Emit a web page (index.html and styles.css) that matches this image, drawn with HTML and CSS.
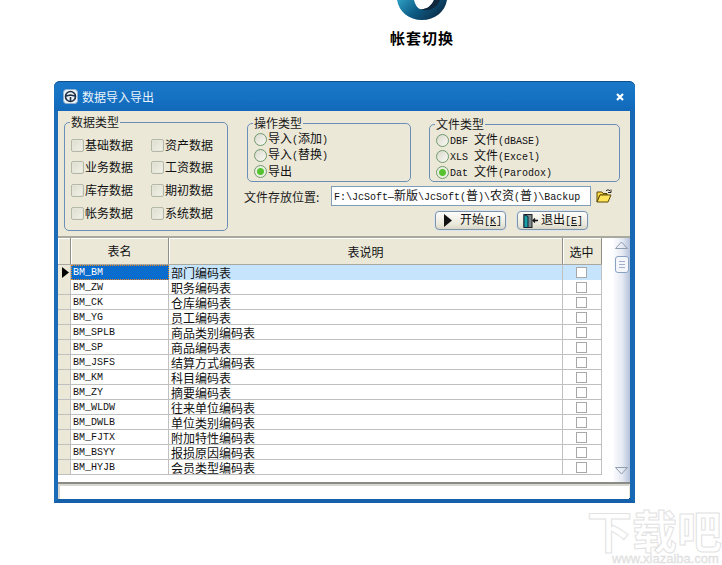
FILE: index.html
```html
<!DOCTYPE html>
<html lang="zh">
<head>
<meta charset="utf-8">
<title>数据导入导出</title>
<link rel="stylesheet" href="styles.css">
</head>
<body>
<header class="top">
  <svg class="logo" width="52" height="20" viewBox="0 0 52 20">
    <defs>
      <linearGradient id="lg" x1="0" y1="0" x2="1" y2="0.4">
        <stop offset="0" stop-color="#2f9fc4"/>
        <stop offset="0.5" stop-color="#0e5d86"/>
        <stop offset="1" stop-color="#0b2f4c"/>
      </linearGradient>
    </defs>
    <path d="M1 0C3 12 13 20 26 20C39 20 49 12 51 0L38 0C35 7 29 10 24 9C21 8 19 4 18 0Z" fill="url(#lg)"/>
    <path d="M38 0C35 7 29 10 24 9C32 13 42 7 44 0Z" fill="#10273c"/>
  </svg>
  <div class="top-title">帐套切换</div>
</header>

<section class="win">
  <div class="titlebar">
    <svg class="tb-icon" width="15" height="15" viewBox="0 0 15 15">
      <rect x="0.5" y="0.5" width="14" height="14" rx="3" fill="#eef3f8" stroke="#8fb0d0"/>
      <circle cx="7.5" cy="7.5" r="5" fill="none" stroke="#1c2f44" stroke-width="1.6"/>
      <path d="M3 7L7.5 6L12 7M7.5 8V12" fill="none" stroke="#1c2f44" stroke-width="1.6"/>
    </svg>
    <span class="tb-text">数据导入导出</span>
    <svg class="tb-close" width="8" height="8" viewBox="0 0 8 8"><path d="M1 1L7 7M7 1L1 7" stroke="#fff" stroke-width="2.2"/></svg>
  </div>

  <div class="panel">
    <fieldset class="grp grp-data">
      <legend>数据类型</legend>
      <div class="checks">
        <label class="chk"><i class="cb"></i>基础数据</label>
        <label class="chk"><i class="cb"></i>资产数据</label>
        <label class="chk"><i class="cb"></i>业务数据</label>
        <label class="chk"><i class="cb"></i>工资数据</label>
        <label class="chk"><i class="cb"></i>库存数据</label>
        <label class="chk"><i class="cb"></i>期初数据</label>
        <label class="chk"><i class="cb"></i>帐务数据</label>
        <label class="chk"><i class="cb"></i>系统数据</label>
      </div>
    </fieldset>

    <div class="side">
      <div class="side-groups">
        <fieldset class="grp grp-op">
          <legend>操作类型</legend>
          <label class="rad"><i class="rb"></i><span>导入<span class="lat">(</span>添加<span class="lat">)</span></span></label>
          <label class="rad"><i class="rb"></i><span>导入<span class="lat">(</span>替换<span class="lat">)</span></span></label>
          <label class="rad"><i class="rb on"></i><span>导出</span></label>
        </fieldset>
        <fieldset class="grp grp-file">
          <legend>文件类型</legend>
          <label class="rad"><i class="rb"></i><span><span class="lat">DBF&nbsp;</span>文件<span class="lat">(dBASE)</span></span></label>
          <label class="rad"><i class="rb"></i><span><span class="lat">XLS&nbsp;</span>文件<span class="lat">(Excel)</span></span></label>
          <label class="rad"><i class="rb on"></i><span><span class="lat">Dat&nbsp;</span>文件<span class="lat">(Parodox)</span></span></label>
        </fieldset>
      </div>
      <div class="path-row">
        <span class="path-label">文件存放位置:</span>
        <div class="path-input"><span class="lat">F:\JcSoft—</span>新版<span class="lat">\JcSoft(</span>普<span class="lat">)\</span>农资<span class="lat">(</span>普<span class="lat">)\Backup</span></div>
        <svg class="folder" width="16" height="14" viewBox="0 0 16 14">
          <path d="M1 3H6L7 4.500H11V6H4L1 13Z" fill="#ffd84a" stroke="#5a4a00"/>
          <path d="M1 13H12L15 6H4Z" fill="#ffe45c" stroke="#5a4a00"/>
          <path d="M10 2C11 0.500 13 0.500 14 2M15 0.500V3.500H12" fill="none" stroke="#222"/>
        </svg>
      </div>
      <div class="btn-row">
        <div class="btn btn-start">
          <svg width="10" height="13" viewBox="0 0 10 13"><path d="M1 0L9 6.500L1 13Z" fill="#111"/></svg>
          <span class="btn-text">开始<span class="lat">[<u>K</u>]</span></span>
        </div>
        <div class="btn btn-exit">
          <svg width="15" height="14" viewBox="0 0 15 14">
            <rect x="1" y="0.500" width="8" height="13" fill="#7d8a90" stroke="#222"/>
            <path d="M1 0.500L5 2.500V13.500L1 13.500Z" fill="#19a0a8" stroke="#123"/>
            <path d="M10 6.500H15M12 4.500L10 6.500L12 8.500" fill="none" stroke="#111" stroke-width="1.300"/>
          </svg>
          <span class="btn-text">退出<span class="lat">[<u>E</u>]</span></span>
        </div>
      </div>
    </div>
  </div>

  <div class="grid-wrap">
    <div class="grid">
      <div class="row head">
        <div class="c ind"></div><div class="c name">表名</div><div class="c desc">表说明</div><div class="c sel">选中</div>
      </div>
      <div class="row cur"><div class="c ind"><svg width="7" height="11" viewBox="0 0 7 11"><path d="M0 0L7 5.500L0 11Z" fill="#000"/></svg></div><div class="c name">BM_BM</div><div class="c desc">部门编码表</div><div class="c sel"><i class="box"></i></div></div>
      <div class="row"><div class="c ind"></div><div class="c name">BM_ZW</div><div class="c desc">职务编码表</div><div class="c sel"><i class="box"></i></div></div>
      <div class="row"><div class="c ind"></div><div class="c name">BM_CK</div><div class="c desc">仓库编码表</div><div class="c sel"><i class="box"></i></div></div>
      <div class="row"><div class="c ind"></div><div class="c name">BM_YG</div><div class="c desc">员工编码表</div><div class="c sel"><i class="box"></i></div></div>
      <div class="row"><div class="c ind"></div><div class="c name">BM_SPLB</div><div class="c desc">商品类别编码表</div><div class="c sel"><i class="box"></i></div></div>
      <div class="row"><div class="c ind"></div><div class="c name">BM_SP</div><div class="c desc">商品编码表</div><div class="c sel"><i class="box"></i></div></div>
      <div class="row"><div class="c ind"></div><div class="c name">BM_JSFS</div><div class="c desc">结算方式编码表</div><div class="c sel"><i class="box"></i></div></div>
      <div class="row"><div class="c ind"></div><div class="c name">BM_KM</div><div class="c desc">科目编码表</div><div class="c sel"><i class="box"></i></div></div>
      <div class="row"><div class="c ind"></div><div class="c name">BM_ZY</div><div class="c desc">摘要编码表</div><div class="c sel"><i class="box"></i></div></div>
      <div class="row"><div class="c ind"></div><div class="c name">BM_WLDW</div><div class="c desc">往来单位编码表</div><div class="c sel"><i class="box"></i></div></div>
      <div class="row"><div class="c ind"></div><div class="c name">BM_DWLB</div><div class="c desc">单位类别编码表</div><div class="c sel"><i class="box"></i></div></div>
      <div class="row"><div class="c ind"></div><div class="c name">BM_FJTX</div><div class="c desc">附加特性编码表</div><div class="c sel"><i class="box"></i></div></div>
      <div class="row"><div class="c ind"></div><div class="c name">BM_BSYY</div><div class="c desc">报损原因编码表</div><div class="c sel"><i class="box"></i></div></div>
      <div class="row"><div class="c ind"></div><div class="c name">BM_HYJB</div><div class="c desc">会员类型编码表</div><div class="c sel"><i class="box"></i></div></div>
    </div>
    <div class="scroll">
      <svg class="arrow" width="13" height="8" viewBox="0 0 13 8"><path d="M0.500 7.500L6.500 1L12.500 7.500" fill="none" stroke="#8f9db0"/><path d="M0.500 7.500H12.500" stroke="#8f9db0"/></svg>
      <div class="thumb"><i></i><i></i><i></i></div>
      <svg class="arrow arrow-down" width="13" height="8" viewBox="0 0 13 8"><path d="M0.500 0.500L6.500 7L12.500 0.500Z" fill="none" stroke="#8f9db0"/></svg>
    </div>
  </div>
  <div class="status"></div>
</section>

<div class="mark">
  <div class="mark-big">下载吧</div>
  <div class="mark-url">www.xiazaiba.com</div>
</div>
</body>
</html>
```

FILE: styles.css
```css
* { box-sizing: border-box; }
html, body { margin: 0; padding: 0; }
body {
  position: relative;
  width: 722px;
  height: 565px;
  overflow: hidden;
  background: #fff;
  font-family: "Noto Sans CJK SC", "Liberation Sans", sans-serif;
  font-size: 12px;
  color: #111;
}
i { display: block; font-style: normal; }
.lat { font-family: "Liberation Mono", monospace; font-size: 10px; }

.top { height: 81px; margin-left: 396px; width: 52px; }
.logo { display: block; }
.top-title {
  margin: 10px 0 0 -6px;
  width: 70px;
  font-size: 15px;
  line-height: 16px;
  font-weight: 700;
  letter-spacing: 1px;
  color: #000;
  white-space: nowrap;
}

.win {
  width: 581px;
  height: 422px;
  margin-left: 54px;
  border: 4px solid #1668b4;
  border-top: 0;
  border-right-width: 5px;
  border-left-color: #1a6cb8;
  border-bottom-color: #1460aa;
  border-radius: 6px 6px 0 0;
  background: #ebe8d8;
  box-shadow: inset 0 -1px 0 #0e4a86;
  display: flex;
  flex-direction: column;
}
.titlebar {
  height: 30px;
  margin: 0 -5px 0 -4px;
  padding: 0 10px 0 9px;
  border-top: 1px solid #0d4f8f;
  border-radius: 6px 6px 0 0;
  background: linear-gradient(#1b78c8, #1470c2 60%, #1268b8);
  display: flex;
  align-items: center;
  color: #fff;
}
.tb-icon { display: block; margin-right: 4px; }
.tb-text { font-size: 12px; line-height: 14px; color: #eaf3fb; }
.tb-close { display: block; margin-left: auto; margin-right: 1px; }

.panel {
  height: 125px;
  padding: 4px 9px 0 6px;
  display: flex;
  align-items: flex-start;
}
.grp {
  margin: 0;
  padding: 0;
  border: 1px solid #6c8fb8;
  border-radius: 5px;
  min-width: 0;
}
.grp legend {
  padding: 0 1px;
  margin-left: 5px;
  font-size: 12px;
  line-height: 14px;
  color: #1a1a1a;
}
.grp-data { width: 164px; height: 116px; flex: none; }
.checks {
  display: grid;
  grid-template-columns: 80px 76px;
  grid-template-rows: 22px 22px 24px 22px;
  padding: 5px 0 0 6px;
}
.chk { display: flex; align-items: center; gap: 1px; line-height: 14px; white-space: nowrap; }
.cb {
  width: 13px;
  height: 13px;
  border: 1px solid #b4b8a8;
  border-radius: 2px;
  background: linear-gradient(135deg, #dcdccc, #f2f2ea);
  box-shadow: inset 0 0 0 1px #e6e6da;
}

.side { margin-left: 19px; width: 373px; flex: none; }
.side-groups { display: flex; align-items: flex-start; height: 67px; }
.grp-op { width: 164px; height: 66px; margin-top: 1px; padding: 0 0 0 6px; flex: none; }
.grp-file { width: 191px; height: 65px; margin: 2px 0 0 18px; padding: 0 0 0 6px; flex: none; }
.grp-op legend, .grp-file legend { margin-left: -1px; margin-bottom: 1px; }
.rad { display: flex; align-items: center; height: 16px; line-height: 14px; white-space: nowrap; }
.rb {
  width: 13px;
  height: 13px;
  margin-right: 1px;
  border: 1px solid #6f9a6c;
  border-radius: 50%;
  background: linear-gradient(135deg, #d8d8cc, #fbfbf6);
  flex: none;
}
.rb.on { background: radial-gradient(circle, #57c22f 0 3px, #e6efe0 4px, #eeeee4); }

.path-row { display: flex; align-items: center; margin: 3px 0 0 -3px; height: 22px; }
.path-label { width: 87px; flex: none; color: #1a1a1a; white-space: nowrap; }
.path-input {
  width: 260px;
  height: 20px;
  padding-left: 2px;
  flex: none;
  background: #fff;
  border: 1px solid #7f9db9;
  line-height: 16px;
  white-space: nowrap;
  overflow: hidden;
}
.folder { display: block; margin-left: 5px; }

.btn-row { display: flex; gap: 11px; margin: 4px 0 0 188px; }
.btn {
  width: 71px;
  height: 19px;
  border: 1px solid #7f93a8;
  border-radius: 4px;
  background: linear-gradient(#fdfdfb, #ebe9dc 70%, #d9d7c8);
  box-shadow: 0 0 0 1px #d9e4ee;
  display: flex;
  align-items: center;
}
.btn-start { padding-left: 7px; gap: 7px; }
.btn-exit { padding-left: 5px; gap: 3px; }
.btn svg { display: block; flex: none; }
.btn-text { font-size: 12px; line-height: 14px; white-space: nowrap; }

.grid-wrap {
  height: 248px;
  border-top: 2px solid #a9a99e;
  border-bottom: 2px solid #8a8a86;
  background: #fff;
  display: flex;
}
.grid { width: 544px; flex: none; }
.row {
  display: grid;
  grid-template-columns: 13px 98px 394px 39px;
  height: 15px;
  border-bottom: 1px solid #c0c0c0;
}
.c {
  border-right: 1px solid #c0c0c0;
  display: flex;
  align-items: center;
  white-space: nowrap;
}
.ind { background: #ebe8d8; }
.ind svg { display: block; margin-left: 4px; }
.name {
  padding: 2px 0 0 2px;
  font-family: "Liberation Mono", monospace;
  font-size: 10px;
  line-height: 12px;
}
.desc { padding-left: 2px; font-size: 12px; line-height: 13px; }
.sel { justify-content: center; padding-right: 1px; }
.box { width: 11px; height: 11px; border: 1px solid #a8a8a8; background: #fff; }

.head { height: 27px; border-bottom: 1px solid #a8a8a0; }
.head .c {
  background: #ebe8d8;
  border-right: 1px solid #8f8f88;
  box-shadow: inset 1px 1px 0 #fff;
  justify-content: center;
  padding: 0;
  font-family: "Noto Sans CJK SC", sans-serif;
  font-size: 12px;
}
.head .sel { padding-right: 1px; }
.cur .name {
  background: #0a6ccc;
  color: #fff;
  border: 1px dotted #f08a20;
  padding: 1px 0 0 1px;
}
.cur .desc, .cur .sel { background: #c6e4fc; }

.scroll {
  width: 17px;
  margin-left: 11px;
  flex: none;
  background: linear-gradient(90deg, #fdfdfe, #e4e9f2 55%, #b4c2da);
  display: flex;
  flex-direction: column;
  align-items: center;
  padding-top: 3px;
}
.arrow { display: block; }
.arrow-down { margin-top: auto; margin-bottom: 7px; }
.thumb {
  width: 14px;
  height: 17px;
  margin-top: 7px;
  border: 1px solid #8aa2c4;
  border-radius: 3px;
  background: #f4f6fb;
  padding: 4px 3px 0;
  display: flex;
  flex-direction: column;
  gap: 2px;
}
.thumb i { height: 1px; background: #9fb0c8; }

.status {
  flex: 1;
  background: #fff;
  box-shadow: inset 2px 2px 0 #d8d8d0;
  margin-right: 1px;
}

.mark {
  position: absolute;
  left: 587px;
  top: 507px;
  width: 135px;
  color: #fff;
  -webkit-text-stroke: 1px #e2e2e2;
}
.mark-big { font-size: 45px; line-height: 46px; font-weight: 700; white-space: nowrap; }
.mark-url {
  margin: 1px 0 0 25px;
  font-family: "Liberation Sans", sans-serif;
  font-size: 13px;
  line-height: 10px;
  color: #e8e8e8;
  -webkit-text-stroke: 0.3px #d8d8d8;
  white-space: nowrap;
}
```
